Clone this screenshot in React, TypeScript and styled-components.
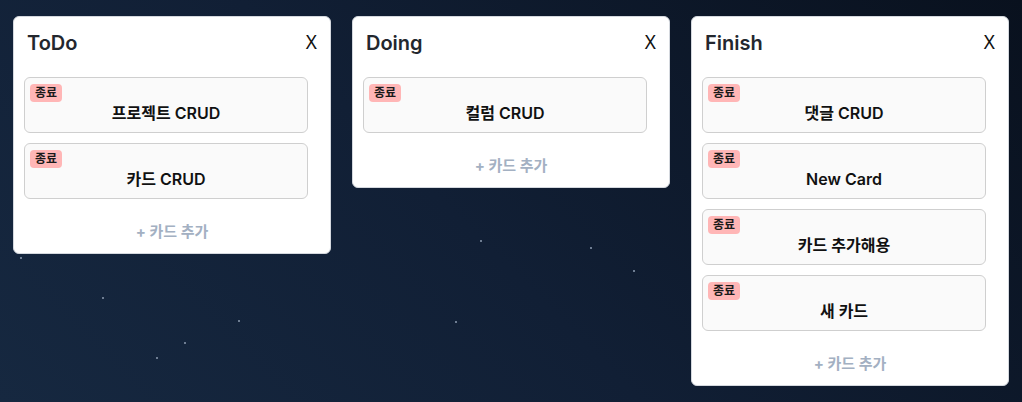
import React from 'react';
import styled, { createGlobalStyle } from 'styled-components';

const GlobalStyle = createGlobalStyle`
  html, body {
    margin: 0;
    padding: 0;
  }
  body {
    font-family: Inter, "Noto Sans CJK KR", sans-serif;
  }
`;

const Board = styled.main`
  position: relative;
  width: 1022px;
  height: 402px;
  overflow: hidden;
  box-sizing: border-box;
  padding: 16px 13px;
  display: flex;
  align-items: flex-start;
  gap: 21px;
  background: linear-gradient(45deg, #162840 0%, #111f35 45%, #09111e 100%);
`;

const Star = styled.span`
  position: absolute;
  width: 2px;
  height: 2px;
  background: #6e7d92;
`;

const Column = styled.section`
  position: relative;
  z-index: 1;
  width: 318px;
  box-sizing: border-box;
  background: #ffffff;
  border: 1px solid #d4d8de;
  border-radius: 6px;
  padding: 13px 0 10px;
`;

const ColumnHeader = styled.header`
  display: flex;
  justify-content: space-between;
  align-items: center;
  padding: 0 13px;
  height: 26px;
`;

const ColumnTitle = styled.h2`
  margin: 0;
  font-size: 20px;
  font-weight: 600;
  color: #23272e;
`;

const CloseButton = styled.button`
  border: none;
  background: none;
  padding: 0 0 3px;
  font-family: "Noto Sans", sans-serif;
  font-size: 19px;
  color: #111;
  cursor: pointer;
`;

const CardList = styled.div`
  display: flex;
  flex-direction: column;
  gap: 10px;
  margin: 21px 0 0 10px;
`;

const Card = styled.article`
  width: 284px;
  height: 56px;
  box-sizing: border-box;
  background: #fafafa;
  border: 1px solid #cfcfcf;
  border-radius: 6px;
  padding: 6px 5px;
`;

const Badge = styled.span`
  display: block;
  width: fit-content;
  background: #ffb6b6;
  color: #1a1a1a;
  border-radius: 4px;
  font-size: 12px;
  font-weight: 700;
  line-height: 18px;
  padding: 0 5px;
`;

const CardTitle = styled.div`
  text-align: center;
  font-size: 16px;
  font-weight: 600;
  color: #111;
  line-height: 20px;
  margin-top: 1px;
`;

const AddButton = styled.button`
  display: block;
  margin: 22px auto 0;
  border: none;
  background: none;
  font-family: inherit;
  font-size: 15px;
  font-weight: 700;
  line-height: 20px;
  color: #a3b0c2;
  cursor: pointer;
`;

const columns = [
  { title: 'ToDo', cards: ['프로젝트 CRUD', '카드 CRUD'] },
  { title: 'Doing', cards: ['컬럼 CRUD'] },
  { title: 'Finish', cards: ['댓글 CRUD', 'New Card', '카드 추가해용', '새 카드'] },
];

const stars = [
  [20, 257], [102, 297], [184, 342], [156, 357], [238, 320],
  [455, 321], [480, 240], [590, 247], [633, 270],
];

export default function App() {
  return (
    <>
      <GlobalStyle />
      <Board>
        {stars.map(([x, y], i) => (
          <Star key={i} style={{ left: x, top: y }} />
        ))}
        {columns.map((col) => (
          <Column key={col.title}>
            <ColumnHeader>
              <ColumnTitle>{col.title}</ColumnTitle>
              <CloseButton>X</CloseButton>
            </ColumnHeader>
            <CardList>
              {col.cards.map((c) => (
                <Card key={c}>
                  <Badge>종료</Badge>
                  <CardTitle>{c}</CardTitle>
                </Card>
              ))}
            </CardList>
            <AddButton>+ 카드 추가</AddButton>
          </Column>
        ))}
      </Board>
    </>
  );
}
